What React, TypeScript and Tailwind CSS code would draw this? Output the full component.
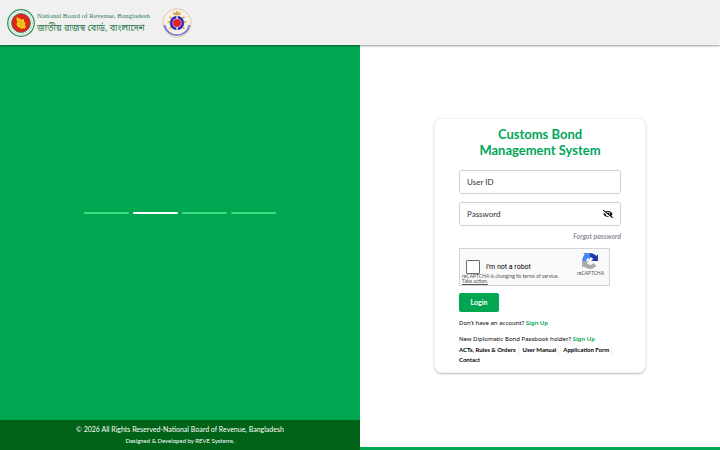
import { useState } from 'react'
import { FaEyeSlash } from 'react-icons/fa'

const slides = [0, 1, 2, 3]

const links = ['ACTs, Rules & Orders', 'User Manual', 'Application Form', 'Contact']

function GovSeal() {
  return (
    <svg viewBox="0 0 56 56" className="size-7 shrink-0" role="img" aria-label="Government of Bangladesh">
      <circle cx="28" cy="28" r="26.5" fill="#fff" stroke="#2f8a55" strokeWidth="2.5" />
      <circle cx="28" cy="28" r="22.5" fill="none" stroke="#a9cfb8" strokeWidth="3" strokeDasharray="2 1.6" />
      <circle cx="28" cy="28" r="19" fill="#e0251b" stroke="#1f7a45" strokeWidth="1.5" />
      <path d="M20 15l3 4 3-1 1 4 4-2 3 1 0 4 3 3-1 4 2 3-3 5-3-2-3 3-3-4-3 0-3-4-1-3 2-4-2-4z" fill="#f9c81c" />
      <path d="M23 25l5 2 3 4M25 31l4 3" stroke="#e0791b" strokeWidth="1.5" fill="none" />
    </svg>
  )
}

function CustomsSeal() {
  return (
    <svg viewBox="0 0 60 60" className="size-[30px] shrink-0" role="img" aria-label="Bangladesh Customs">
      <circle cx="30" cy="30" r="28.5" fill="#f6f1ec" stroke="#dfb98c" strokeWidth="1.5" />
      <path d="M5 34a25.500 25.500 0 0 0 50 0" fill="none" stroke="#6a6dcc" strokeWidth="3.500" />
      <path d="M5 34a25.500 25.500 0 0 0 50 0" fill="none" stroke="#b9b9e4" strokeWidth="1" strokeDasharray="1.500 1.500" />
      <path d="M15 18l5 3M45 18l-5 3M11 28h5M49 28h-5M15 41l5-3M45 41l-5-3" stroke="#dca84a" strokeWidth="3" />
      <path d="M24 14l-2-7 5 3 3-5 3 5 5-3-2 7z" fill="#dca440" />
      <circle cx="30" cy="30" r="15" fill="#e8c66a" />
      <circle cx="30" cy="30" r="14" fill="#2326c8" />
      <path d="M30 16v28" stroke="#fff" strokeWidth="2.500" />
      <circle cx="30" cy="30" r="9" fill="#fff" />
      <circle cx="30" cy="30" r="8" fill="#e8202c" />
    </svg>
  )
}

function RecaptchaLogo() {
  return (
    <svg viewBox="0 0 64 64" className="size-4" aria-hidden="true">
      <path d="M64 32a31 31 0 0 0-.04-1.37V4.6l-7.2 7.2A31.9 31.9 0 0 0 32.1 0 31.9 31.9 0 0 0 6.6 12.6l11.8 11.9a15.6 15.6 0 0 1 4.8-5.3c2-1.6 4.8-2.8 8.7-2.8.5 0 .8.05 1.1.15a15.6 15.6 0 0 1 12 7.3l-8.4 8.4z" fill="#1c3aa9" />
      <path d="M31.9.04L30.5.06H4.5l7.2 7.2A31.9 31.9 0 0 0 0 32c0 10.400 5 19.700 12.600 25.500l11.900-11.900a15.600 15.600 0 0 1-5.300-4.800c-1.600-2-2.800-4.800-2.800-8.700 0-.5.05-.8.15-1.100a15.600 15.600 0 0 1 7.300-12l8.400 8.400z" fill="#4285f4" />
      <path d="M0 32v27.500l7.200-7.200A31.900 31.900 0 0 0 32 64c10.400 0 19.700-5 25.500-12.600L45.600 39.500a15.600 15.600 0 0 1-4.800 5.300c-2 1.600-4.800 2.800-8.700 2.800-.5 0-.8-.05-1.100-.15a15.600 15.600 0 0 1-12-7.300l8.400-8.400z" fill="#ababab" />
    </svg>
  )
}

export default function App() {
  const [active, setActive] = useState(1)
  const [visible, setVisible] = useState(false)

  return (
    <div className="flex min-h-screen flex-col bg-white font-[Lato,'Noto_Sans',sans-serif] text-black">
      <header className="z-10 flex h-[45px] items-center gap-3 bg-[#f0f0f0] px-[7px] shadow-[0_1px_2px_#0006]">
        <div className="flex items-center gap-0.5">
          <GovSeal />
          <div className="text-[#2f7d4f]">
            <p className="font-['Liberation_Serif',serif] text-[7px] leading-3">National Board of Revenue, Bangladesh</p>
            <p className="font-['Noto_Sans_Bengali','Noto_Sans',sans-serif] text-[9px] leading-3.5">জাতীয় রাজস্ব বোর্ড, বাংলাদেশ</p>
          </div>
        </div>
        <CustomsSeal />
      </header>

      <main className="grid flex-1 grid-cols-2">
        {/* Carousel */}
        <section className="flex flex-col bg-[#00a650]">
          <div className="flex flex-1 items-center justify-center gap-1 pb-10">
            {slides.map(i => (
              <button key={i} type="button" aria-label={`Slide ${i + 1}`} onClick={() => setActive(i)}
                className={i === active ? 'h-0.5 w-[45px] rounded-sm bg-white' : 'h-0.5 w-[45px] rounded-sm bg-[#40dc84]'} />
            ))}
          </div>
          <footer className="bg-[#006317] py-[3px] text-center text-white">
            <p className="text-[7px] leading-3">© 2026 All Rights Reserved-National Board of Revenue, Bangladesh</p>
            <p className="text-[6px] leading-3">Designed &amp; Developed by REVE Systems.</p>
          </footer>
        </section>

        {/* Login */}
        <section className="flex items-center justify-center border-b-[3px] border-[#00a650] pb-0.5">
          <form onSubmit={e => e.preventDefault()} className="w-[212px] rounded-lg border border-[#f3f3f3] px-6 py-[7px] shadow-[0_1px_2px_#0004]">
            <h1 className="text-center text-[13px] leading-4 font-bold text-[#00a65a]">Customs Bond<br />Management System</h1>
            <input aria-label="User ID" placeholder="User ID"
              className="mt-3 block h-6 w-full rounded-[3px] border border-[#d0d0d0] px-[7px] text-[8px] placeholder:text-[#333]" />
            <div className="relative mt-2">
              <input type={visible ? 'text' : 'password'} aria-label="Password" placeholder="Password"
                className="block h-6 w-full rounded-[3px] border border-[#d0d0d0] px-[7px] text-[8px] placeholder:text-[#333]" />
              <button type="button" aria-label="Show password" onClick={() => setVisible(!visible)} className="absolute inset-y-0 right-2">
                <FaEyeSlash className="size-2.5" />
              </button>
            </div>
            <div className="mt-1 text-right text-[7px] leading-3 text-[#6c6c80] italic"><a href="#forgot">Forgot password</a></div>

            <div className="mt-1.5 flex h-[38px] w-[151px] justify-between border border-[#d3d3d3] bg-[#f9f9f9] font-[Roboto,sans-serif]">
              <div className="pt-[11px] pl-0.5">
                <label className="flex items-center gap-1.5 pl-1 text-[7px] leading-3.5 whitespace-nowrap">
                  <input type="checkbox" className="size-3.5 appearance-none rounded-[1px] border border-[#6c6c6c] bg-white" />
                  I'm not a robot
                </label>
                <p className="font-[Lato,sans-serif] text-[5px] leading-[5px] text-[#555]">reCAPTCHA is changing its terms of service.<br /><a href="#action" className="underline">Take action.</a></p>
              </div>
              <div className="flex flex-col items-center pt-1 pr-[5px] text-[5px] leading-2 text-[#555]">
                <RecaptchaLogo />
                reCAPTCHA
              </div>
            </div>

            <button className="mt-[7px] block h-[19px] w-10 rounded-xs bg-[#00a650] text-[7px] font-bold text-white">Login</button>
            <p className="mt-[5px] font-['Noto_Sans',sans-serif] text-[6px] leading-3">Don’t have an account? <a href="#signup" className="font-semibold text-[#00a650]">Sign Up</a></p>
            <p className="mt-1 font-['Noto_Sans',sans-serif] text-[6px] leading-3 whitespace-nowrap">New Diplomatic Bond Passbook holder? <a href="#diplomatic" className="font-semibold text-[#00a650]">Sign Up</a></p>
            <nav className="flex flex-wrap text-[6px] leading-2.5 font-bold">
              {links.map(l => (
                <a key={l} href="#info" className="mr-1 border-r border-[#eee] pr-0.5 last:border-0">{l}</a>
              ))}
            </nav>
          </form>
        </section>
      </main>
    </div>
  )
}
